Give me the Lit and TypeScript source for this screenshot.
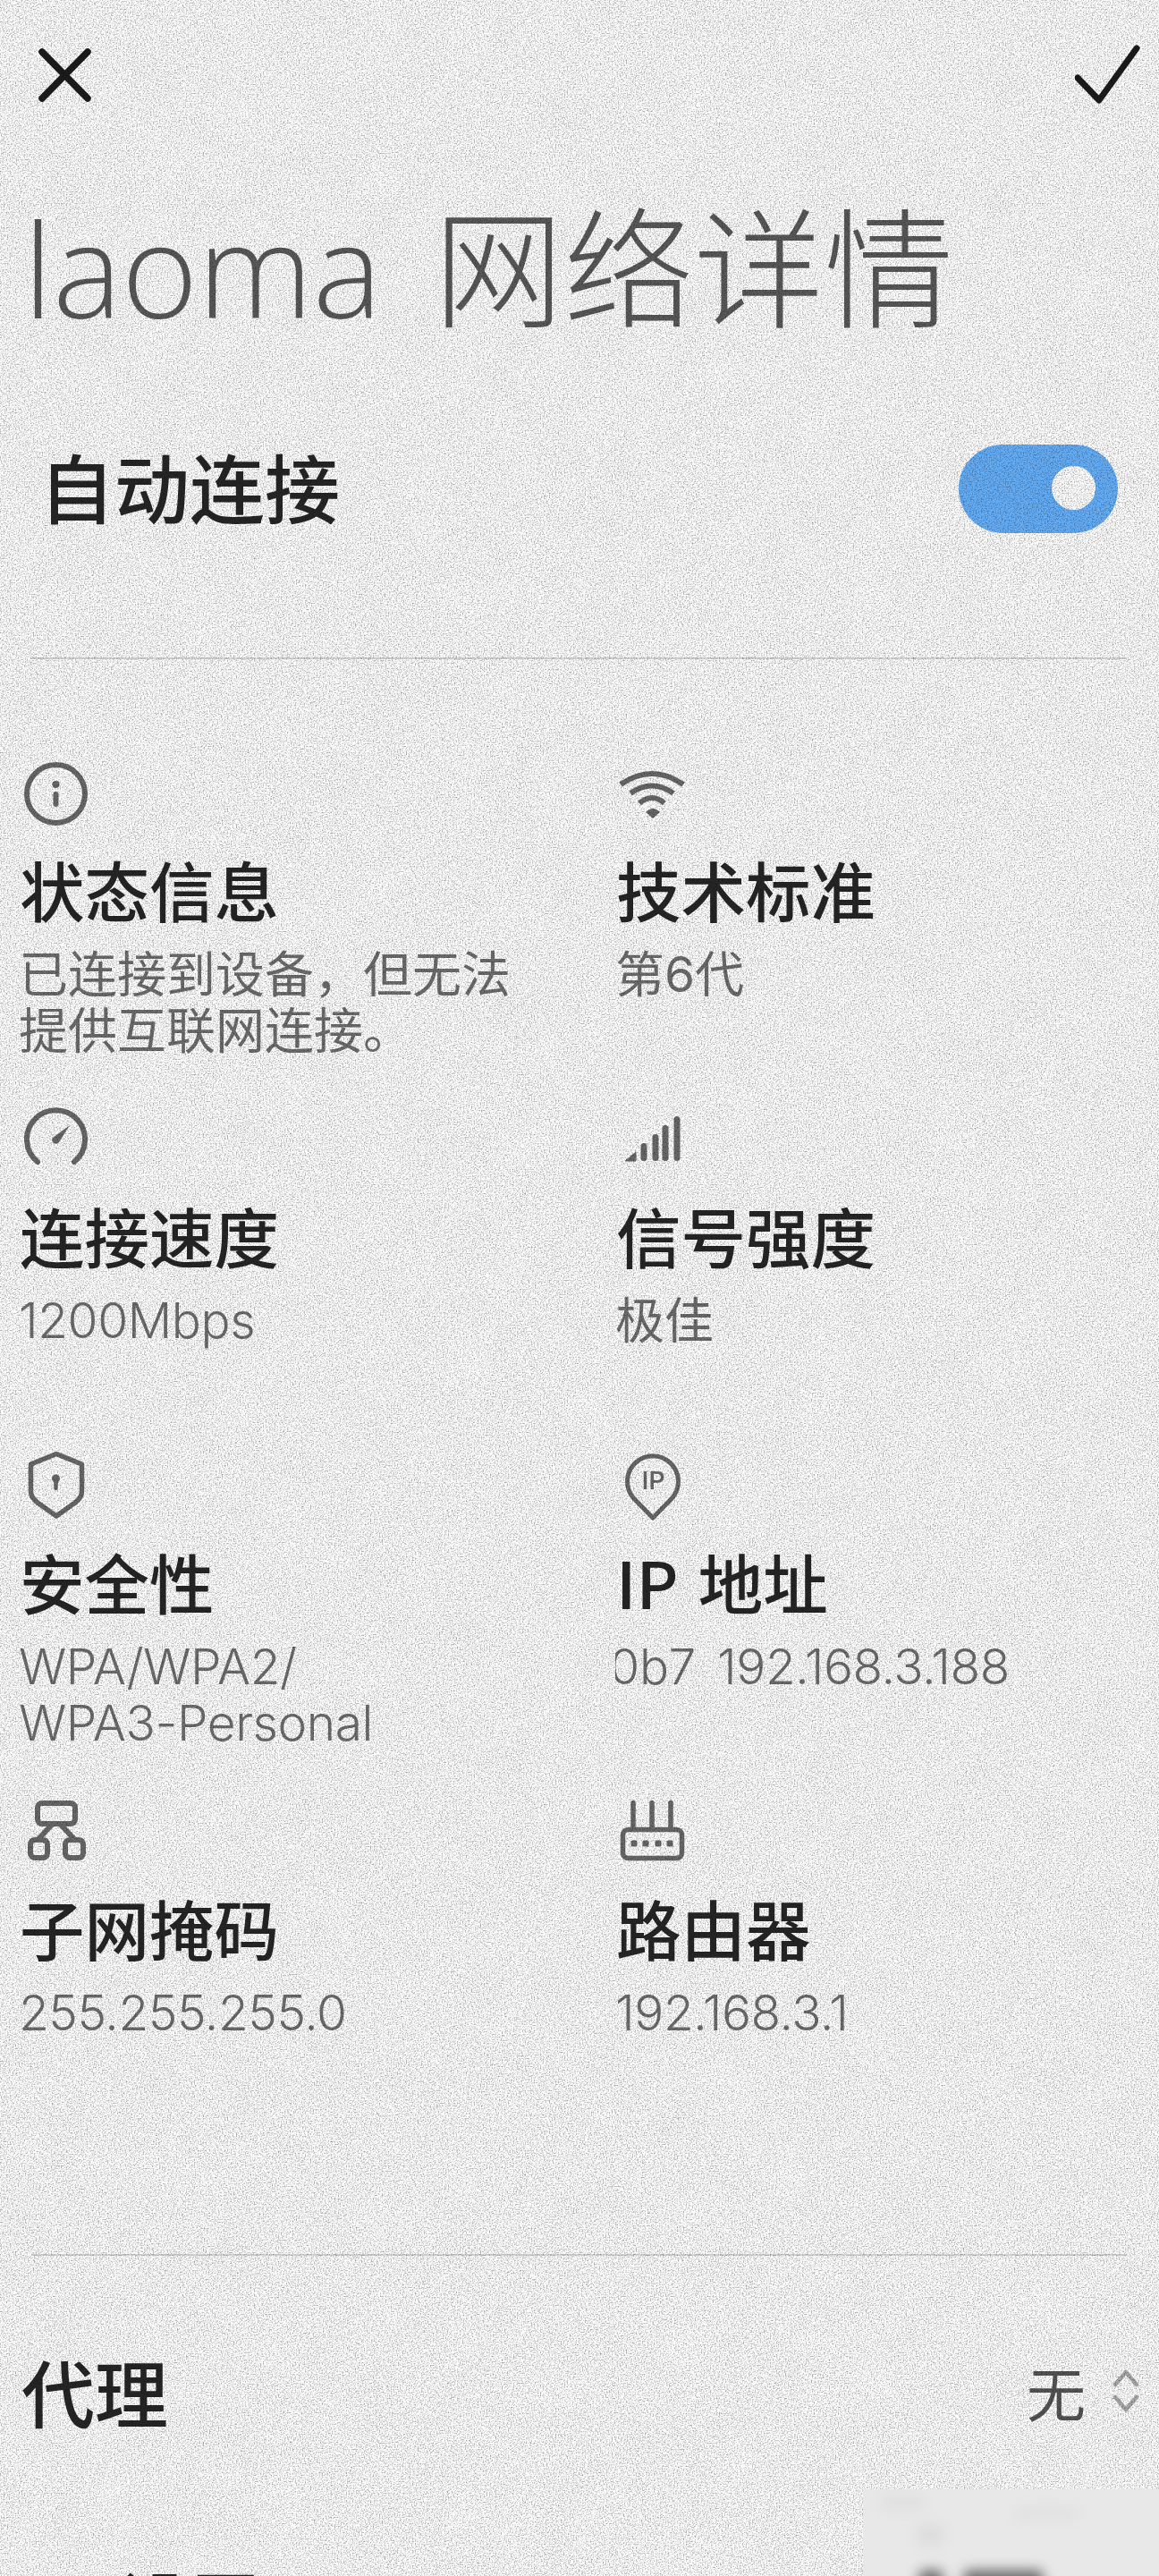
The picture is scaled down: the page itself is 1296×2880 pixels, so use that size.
import { LitElement, html, css, svg } from "lit";
import { customElement } from "lit/decorators.js";

const G = "#6a6a6a";
const icons: Record<string, unknown> = {
  info: svg`<circle cx="38.5" cy="39.5" r="32.5" fill="none" stroke="${G}" stroke-width="6"/><circle cx="38.5" cy="29" r="4" fill="${G}"/><path d="M38.5 40v11" stroke="${G}" stroke-width="6" stroke-linecap="round"/>`,
  wifi: svg`<g fill="none" stroke="${G}" stroke-width="6"><path d="M3 29Q38 5 73 29"/><path d="M14 39Q38 22 62 39"/><path d="M24 50Q38 38 52 50"/></g><path d="M31 60Q39 52 47 60L39 67z" fill="${G}"/>`,
  gauge: svg`<path d="M18 64A32.500 32.500 0 1 1 59 64" fill="none" stroke="${G}" stroke-width="6" stroke-linecap="round"/><path d="M54 23L42 42a4 4 0 0 1-7-5z" fill="${G}"/>`,
  signal: svg`<path d="M8 63l12-10v10z" fill="${G}" stroke="${G}" stroke-width="1" stroke-linejoin="round"/><g stroke="${G}" stroke-width="7" stroke-linecap="round"><path d="M29 46.500v13M42 36.500v23M53 26.500v33M66 16.500v43"/></g>`,
  shield: svg`<path d="M39 3.500L67.500 15V46Q67.500 52 60 58L39 73L18 58Q10.500 52 10.500 46V15z" fill="none" stroke="${G}" stroke-width="5.500" stroke-linejoin="round"/><circle cx="38.500" cy="31" r="4.500" fill="${G}"/><path d="M38.500 32v10" stroke="${G}" stroke-width="4.500" stroke-linecap="round"/>`,
  ip: svg`<path d="M39 75L17.500 53A28.500 28.500 0 1 1 60.500 53z" fill="none" stroke="${G}" stroke-width="5" stroke-linejoin="round"/><text x="39.500" y="43" text-anchor="middle" font-family="Roboto, sans-serif" font-weight="500" font-size="28" fill="${G}">IP</text>`,
  net: svg`<g fill="none" stroke="${G}" stroke-width="6"><rect x="18" y="7" width="42" height="23" rx="5"/><rect x="10" y="48" width="19" height="20" rx="5"/><rect x="49" y="48" width="20" height="20" rx="5"/><path d="M34 31L19 47M44 31l15 16"/></g>`,
  router: svg`<g fill="none" stroke="${G}" stroke-width="5.500"><rect x="5.500" y="36.500" width="66" height="32" rx="6"/><path d="M17 6.500v30M38 6.500v30M59 6.500v30" stroke-linecap="round"/></g><g fill="${G}"><rect x="14.500" y="48.500" width="7" height="7" rx="1.500"/><rect x="27.500" y="48.500" width="7" height="7" rx="1.500"/><rect x="41.500" y="48.500" width="7" height="7" rx="1.500"/><rect x="54.500" y="48.500" width="7" height="7" rx="1.500"/></g>`,
};

interface Item { icon: string; title: string; lines: unknown[]; cjk?: boolean; }

const items: Item[] = [
  { icon: "info", title: "状态信息", cjk: true, lines: ["已连接到设备，但无法", "提供互联网连接。"] },
  { icon: "wifi", title: "技术标准", cjk: true, lines: ["第6代"] },
  { icon: "gauge", title: "连接速度", lines: ["1200Mbps"] },
  { icon: "signal", title: "信号强度", cjk: true, lines: ["极佳"] },
  { icon: "shield", title: "安全性", lines: ["WPA/WPA2/", "WPA3-Personal"] },
  { icon: "ip", title: "IP 地址", lines: [html`<span class="clip"><span>fe80::0b7</span></span><span class="ipv">192.168.3.188</span>`] },
  { icon: "net", title: "子网掩码", lines: ["255.255.255.0"] },
  { icon: "router", title: "路由器", lines: ["192.168.3.1"] },
];

@customElement("app-root")
export class AppRoot extends LitElement {
  static styles = css`
    :host {
      display: block;
      position: relative;
      width: 1296px;
      height: 2880px;
      overflow: hidden;
      background: #ffffff;
      font-family: "Noto Sans CJK SC", "Noto Sans", sans-serif;
    }
    .top {
      display: flex; justify-content: space-between;
      padding: 48px 18px 0 38px; height: 72px;
    }
    .top svg { display: block; }
    .big {
      margin: 100px 0 0 26px; height: 160px;
      font-size: 145.5px; line-height: 160px; font-weight: 300; color: #5a5a5a; word-spacing: 20px;
      white-space: pre; font-family: "Open Sans", "Noto Sans CJK SC", sans-serif;
    }
    .auto {
      display: flex; justify-content: space-between; align-items: center;
      padding: 0 46px 0 44px; margin-top: 113px; height: 100px;
    }
    .auto .t { font-size: 84px; line-height: 100px; font-weight: 500; color: #262626; }
    .sw {
      position: relative; width: 178px; height: 99px; border-radius: 50px; background: #65aef8; margin-top: 6px;
    }
    .sw::after {
      content: ""; position: absolute; right: 25px; top: 24px;
      width: 49px; height: 49px; border-radius: 50%; background: #ffffff;
    }
    .rule { height: 2px; background: #d8d8d8; margin: 0 36px 0 35px; }
    .r1 { margin-top: 142px; }
    .grid {
      display: grid; grid-template-columns: 667px 1fr;
      grid-auto-rows: 387px; padding: 111px 0 0 24px; height: 1783px; box-sizing: border-box;
    }
    .cell { display: flex; flex-direction: column; }
    .cell svg { display: block; flex: none; }
    .cell h3 {
      margin: 20px 0 18px -2px; font-size: 72.5px; line-height: 92px; font-weight: 500; color: #262626; white-space: pre;
      word-spacing: 6px;
    }
    .cell .v {
      font-size: 55px; line-height: 63px; color: #6e6e6e; white-space: nowrap; font-weight: 300; margin-left: -3px;
      font-family: "Inter", "Noto Sans CJK SC", sans-serif; letter-spacing: -0.4px;
    }
    .cell .v.cjk { font-weight: 400; letter-spacing: 0; }
    .clip { display: inline-flex; justify-content: flex-end; width: 90px; overflow: hidden; vertical-align: bottom; }
    .ipv { margin-left: 24px; }
    .proxy {
      display: flex; justify-content: space-between; align-items: center;
      padding: 0 22px 0 24px; margin-top: 103px; height: 96px;
    }
    .proxy .l { font-size: 82px; line-height: 96px; font-weight: 500; color: #262626; }
    .proxy .rt { display: flex; align-items: center; gap: 30px; }
    .proxy .n { font-size: 66px; line-height: 96px; color: #555; }
    .proxy svg { display: block; }
    .cut { margin: 139px 0 0 132px; font-size: 80px; line-height: 96px; font-weight: 500; color: #262626; }
    .grain { position: absolute; inset: 0; width: 100%; height: 100%; pointer-events: none; mix-blend-mode: multiply; }
    .blur {
      position: absolute; left: 965px; top: 2783px; width: 331px; height: 97px;
      background: #e8e8e8; overflow: hidden; pointer-events: none;
    }
    .blob { position: absolute; border-radius: 8px; filter: blur(7px); }
    .b1 { left: 20px; top: 8px; width: 50px; height: 14px; background: #dedede; }
    .b2 { left: 60px; top: 40px; width: 30px; height: 22px; background: #dcdcdc; }
    .b3 { left: 170px; top: 20px; width: 70px; height: 14px; background: #e0e0e0; }
    .b4 { left: 62px; top: 90px; width: 28px; height: 30px; background: #707070; }
    .b5 { left: 112px; top: 90px; width: 90px; height: 30px; background: #707070; }
  `;

  render() {
    return html`
      <div class="top">
        <svg width="66" height="72" viewBox="0 0 66 72" fill="none" stroke="#1c1c1c" stroke-width="7.500" stroke-linecap="round"><path d="M9 10l51 52M60 10L9 62"/></svg>
        <svg width="76" height="72" viewBox="0 0 76 72" fill="none" stroke="#1c1c1c" stroke-width="7" stroke-linecap="round" stroke-linejoin="round"><path d="M3 39l24 25L69 6"/></svg>
      </div>
      <div class="big">laoma 网络详情</div>
      <div class="auto"><span class="t">自动连接</span><span class="sw"></span></div>
      <div class="rule r1"></div>
      <div class="grid">
        ${items.map((it) => html`<div class="cell">
          <svg width="80" height="80" viewBox="0 0 80 80">${icons[it.icon]}</svg>
          <h3>${it.title}</h3>
          ${it.lines.map((l) => html`<div class="v ${it.cjk ? "cjk" : ""}">${l}</div>`)}
        </div>`)}
      </div>
      <div class="rule"></div>
      <div class="proxy">
        <span class="l">代理</span>
        <span class="rt"><span class="n">无</span>
          <svg width="30" height="50" viewBox="0 0 30 50" fill="none" stroke="#a9a9a9" stroke-width="4.500" stroke-linecap="round" stroke-linejoin="round"><path d="M3 18L15 4l12 14M3 32l12 14 12-14"/></svg>
        </span>
      </div>
      <div class="cut">设置</div>
      <svg class="grain"><filter id="n" x="0" y="0" width="100%" height="100%" color-interpolation-filters="sRGB"><feTurbulence type="fractalNoise" baseFrequency="0.7" numOctaves="2" seed="4" result="a"/><feTurbulence type="fractalNoise" baseFrequency="0.02" numOctaves="2" seed="9" result="b"/><feComposite in="a" in2="b" operator="arithmetic" k1="0" k2="0.97" k3="0.03" k4="0"/><feColorMatrix values="0.95 0 0 0 0.455  0.95 0 0 0 0.455  0.95 0 0 0 0.455  0 0 0 0 1"/></filter><rect width="100%" height="100%" filter="url(#n)"/></svg>
      <div class="blur"><i class="blob b1"></i><i class="blob b2"></i><i class="blob b3"></i><i class="blob b4"></i><i class="blob b5"></i></div>
    `;
  }
}
